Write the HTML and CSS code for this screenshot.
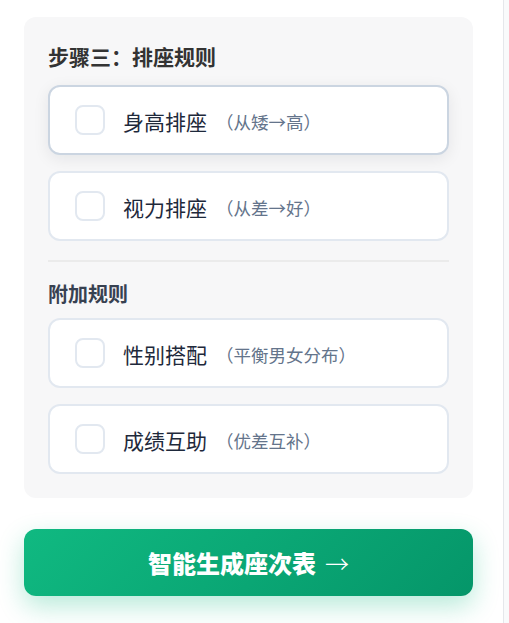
FILE: index.html
```html
<!DOCTYPE html>
<html lang="zh-CN">
<head>
<meta charset="utf-8">
<title>排座规则</title>
<link rel="stylesheet" href="styles.css">
</head>
<body>
<div class="page">
  <section class="card">
    <h3 class="step-title">步骤三：排座规则</h3>
    <label class="option option-hover">
      <span class="checkbox"></span>
      <span class="label">身高排座</span>
      <span class="sub">（从矮→高）</span>
    </label>
    <label class="option">
      <span class="checkbox"></span>
      <span class="label">视力排座</span>
      <span class="sub">（从差→好）</span>
    </label>
    <div class="divider"></div>
    <h4 class="sub-title">附加规则</h4>
    <label class="option">
      <span class="checkbox"></span>
      <span class="label">性别搭配</span>
      <span class="sub">（平衡男女分布）</span>
    </label>
    <label class="option">
      <span class="checkbox"></span>
      <span class="label">成绩互助</span>
      <span class="sub">（优差互补）</span>
    </label>
  </section>
  <button class="generate">智能生成座次表 <span class="arrow">→</span></button>
</div>
<div class="edge"></div>
</body>
</html>
```

FILE: styles.css
```css
html, body {
  margin: 0;
  padding: 0;
  background: #ffffff;
  min-height: 623px;
}

body {
  font-family: "Noto Sans CJK SC", sans-serif;
  color: #1e293b;
  overflow: hidden;
}

.page {
  width: 449px;
  padding: 17px 0 28px 24px;
}

.card {
  background: #f7f7f8;
  border-radius: 12px;
  padding: 24px;
  display: flex;
  flex-direction: column;
}

.step-title {
  margin: 0 0 13px 0;
  font-size: 21px;
  line-height: 31px;
  font-weight: 700;
  color: #333333;
}

.sub-title {
  margin: 17px 0 9px 0;
  font-size: 20px;
  line-height: 30px;
  font-weight: 700;
  color: #374151;
}

.option {
  box-sizing: border-box;
  height: 70px;
  margin-bottom: 16px;
  background: #ffffff;
  border: 2px solid #e2e8f0;
  border-radius: 12px;
  display: flex;
  align-items: center;
  padding: 0 0 0 25px;
}

.option:last-child {
  margin-bottom: 0;
}

.option-hover {
  border-color: #cbd5e1;
  box-shadow: 0 4px 16px rgba(15, 23, 42, 0.08);
}

.checkbox {
  box-sizing: border-box;
  width: 30px;
  height: 30px;
  border: 2px solid #e2e8f0;
  border-radius: 8px;
  background: #ffffff;
  flex-shrink: 0;
  margin-right: 18px;
}

.label {
  font-size: 21px;
  line-height: 30px;
  font-weight: 400;
  color: #1e293b;
  padding-top: 2px;
}

.sub {
  font-size: 17.5px;
  line-height: 30px;
  font-weight: 400;
  color: #64748b;
  margin-left: 9px;
  padding-top: 3px;
}

.divider {
  height: 2px;
  background: #ebebeb;
  margin-top: 3px;
}

.generate {
  box-sizing: border-box;
  display: flex;
  align-items: center;
  justify-content: center;
  width: 449px;
  height: 67px;
  margin-top: 31px;
  border: none;
  border-radius: 12px;
  background: linear-gradient(135deg, #10b981 0%, #059669 100%);
  box-shadow: 0 10px 26px rgba(16, 185, 129, 0.3);
  color: #ffffff;
  font-family: "Noto Sans CJK SC", sans-serif;
  font-size: 24px;
  font-weight: 900;
  padding: 0;
}

.arrow {
  font-family: "Noto Sans CJK SC", sans-serif;
  font-weight: 300;
  font-size: 24px;
  margin-left: 9px;
}

.edge {
  position: fixed;
  top: 0;
  right: 0;
  width: 5px;
  height: 623px;
  border-left: 1px solid #e5e7eb;
  background: #f9fafb;
}
```
